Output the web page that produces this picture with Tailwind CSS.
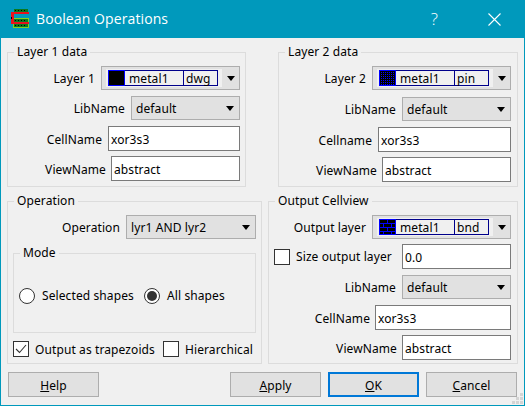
<!DOCTYPE html>
<html lang="en">
<head>
    <meta charset="UTF-8">
    <title>Boolean Operations</title>
    <script src="https://cdn.jsdelivr.net/npm/@tailwindcss/browser@4"></script>
</head>
<body class="w-[525px] h-[406px] overflow-hidden bg-[#f0f0f0] text-black font-['Noto_Sans',sans-serif] text-[12px] tracking-[0.1px] leading-[14px]">

<div class="relative w-[525px] h-[406px] flex flex-col border-x border-b border-[#0099bc]">

    <!-- title bar -->
    <div class="h-[38px] -mx-px shrink-0 bg-[#0099bc] text-white flex items-center">
        <svg class="ml-[10px] w-[20px] h-[20px]" viewBox="0 0 20 20" shape-rendering="crispEdges">
            <path d="M3 9h16v10H3zM4 10v8h14v-8z" fill="#7ed321" fill-rule="evenodd"/>
            <rect x="4" y="0" width="14" height="3" fill="#0a7a20"/>
            <rect x="4" y="10" width="14" height="3" fill="#0a7a20"/>
            <rect x="4" y="15" width="14" height="3" fill="#0a7a20"/>
            <path d="M5 1h1v1H5zM8 1h1v1H8zM11 1h1v1h-1zM14 1h1v1h-1zM5 11h1v1H5zM8 11h1v1H8zM11 11h1v1h-1zM14 11h1v1h-1zM5 16h1v1H5zM8 16h1v1H8zM11 16h1v1h-1zM14 16h1v1h-1z" fill="#000"/>
            <path d="M1 3h18v2H4v8h15v2H1z" fill="#e8101c"/>
            <rect y="8" x="1" width="1" height="2" fill="#000"/>
        </svg>
        <span class="ml-[6px] font-['Open_Sans',sans-serif] text-[14px] tracking-[0.1px]">Boolean Operations</span>
        <span class="ml-auto mr-[50px] font-['Open_Sans',sans-serif] font-light text-[17px]">?</span>
        <svg class="mr-[24px] w-[13px] h-[13px]" viewBox="0 0 13 13" fill="none" stroke="#fff" stroke-width="1.1"><path d="M.5.5l12 12M12.5.5l-12 12"/></svg>
    </div>

    <div class="flex-1 px-[6px] pt-[7px] flex flex-col">

        <!-- top row -->
        <div class="flex justify-between">
            <fieldset class="w-[239px] h-[142px] border border-[#dcdcdc] pr-[5px]">
                <legend class="ml-[6px] px-[3px]">Layer 1 data</legend>
                <div class="pt-[7px] flex flex-col">
                    <div class="h-[24px] flex justify-end items-center gap-[6px]">
                        <span class="pt-[2px]">Layer 1</span>
                        <div class="w-[139px] h-[24px] border border-[#adadad] bg-[#e1e1e1] flex items-center pl-[4px]">
                            <div class="w-[116px] h-[18px] bg-[#f0f0f0] flex items-center pl-[2px]">
                                <div class="w-[110px] h-[16px] border border-[#00008b] flex items-center">
                                    <span class="w-[17px] h-[16px] -ml-px bg-black border border-[#0000ff] shrink-0"></span>
                                    <span class="w-[59px] pl-[4px] pt-px border-r border-[#00008b] h-[14px]">metal1</span>
                                    <span class="pl-[2px] pt-[2px]">dwg</span>
                                </div>
                            </div>
                            <svg class="ml-[5px] w-[8px] h-[5px]" viewBox="0 0 8 5"><path d="M0 0h8L4 5z" fill="#000"/></svg>
                        </div>
                    </div>
                    <div class="h-[24px] mt-[6px] flex justify-end items-center gap-[6px]">
                        <span class="pt-[2px]">LibName</span>
                        <div class="w-[109px] h-[24px] border border-[#adadad] bg-[#e1e1e1] flex items-center pl-[4px]">
                            <span class="flex-1 pt-[2px]">default</span>
                            <svg class="mr-[5px] w-[8px] h-[5px]" viewBox="0 0 8 5"><path d="M0 0h8L4 5z" fill="#000"/></svg>
                        </div>
                    </div>
                    <div class="h-[25px] mt-[6px] flex justify-end items-center gap-[6px]">
                        <span class="pt-[2px]">CellName</span>
                        <div class="w-[132px] h-[25px] border border-[#7a7a7a] bg-white flex items-center pl-[2px] pt-[2px]">xor3s3</div>
                    </div>
                    <div class="h-[25px] mt-[5px] flex justify-end items-center gap-[5px]">
                        <span class="pt-[2px]">ViewName</span>
                        <div class="w-[129px] h-[25px] border border-[#7a7a7a] bg-white flex items-center pl-[2px] pt-[2px]">abstract</div>
                    </div>
                </div>
            </fieldset>

            <fieldset class="w-[240px] h-[142px] border border-[#dcdcdc] pr-[6px]">
                <legend class="ml-[6px] px-[3px]">Layer 2 data</legend>
                <div class="pt-[7px] flex flex-col">
                    <div class="h-[24px] flex justify-end items-center gap-[6px]">
                        <span class="pt-[2px]">Layer 2</span>
                        <div class="w-[139px] h-[24px] border border-[#adadad] bg-[#e1e1e1] flex items-center pl-[4px]">
                            <div class="w-[116px] h-[18px] bg-[#f0f0f0] flex items-center pl-[2px]">
                                <div class="w-[110px] h-[16px] border border-[#00008b] flex items-center">
                                    <svg class="w-[17px] h-[16px] -ml-px shrink-0" viewBox="0 0 17 16" shape-rendering="crispEdges">
                                        <defs><pattern id="dots" width="2" height="2" patternUnits="userSpaceOnUse"><rect width="2" height="2" fill="#000"/><rect width="1" height="1" fill="#0000ff"/></pattern></defs>
                                        <rect width="17" height="16" fill="url(#dots)"/>
                                        <rect x=".5" y=".5" width="16" height="15" fill="none" stroke="#0000ff"/>
                                    </svg>
                                    <span class="w-[59px] pl-[4px] pt-px border-r border-[#00008b] h-[14px]">metal1</span>
                                    <span class="pl-[2px] pt-[2px]">pin</span>
                                </div>
                            </div>
                            <svg class="ml-[5px] w-[8px] h-[5px]" viewBox="0 0 8 5"><path d="M0 0h8L4 5z" fill="#000"/></svg>
                        </div>
                    </div>
                    <div class="h-[24px] mt-[7px] flex justify-end items-center gap-[6px]">
                        <span class="pt-[2px]">LibName</span>
                        <div class="w-[109px] h-[24px] border border-[#adadad] bg-[#e1e1e1] flex items-center pl-[4px]">
                            <span class="flex-1 pt-[2px]">default</span>
                            <svg class="mr-[5px] w-[8px] h-[5px]" viewBox="0 0 8 5"><path d="M0 0h8L4 5z" fill="#000"/></svg>
                        </div>
                    </div>
                    <div class="h-[25px] mt-[6px] flex justify-end items-center gap-[6px]">
                        <span class="pt-[2px]">Cellname</span>
                        <div class="w-[133px] h-[25px] border border-[#7a7a7a] bg-white flex items-center pl-[2px] pt-[2px]">xor3s3</div>
                    </div>
                    <div class="h-[25px] mt-[5px] flex justify-end items-center gap-[5px]">
                        <span class="pt-[2px]">ViewName</span>
                        <div class="w-[129px] h-[25px] border border-[#7a7a7a] bg-white flex items-center pl-[2px] pt-[2px]">abstract</div>
                    </div>
                </div>
            </fieldset>
        </div>

        <!-- bottom row -->
        <div class="flex justify-between mt-[7px]">
            <fieldset class="w-[255px] h-[170px] border border-[#dcdcdc] px-[5px]">
                <legend class="ml-[1px] px-[3px]">Operation</legend>
                <div class="pt-[7px] flex flex-col">
                    <div class="h-[24px] flex justify-end items-center gap-[6px]">
                        <span class="pt-[2px]">Operation</span>
                        <div class="w-[130px] h-[24px] border border-[#adadad] bg-[#e1e1e1] flex items-center pl-[4px]">
                            <span class="flex-1 pt-[2px]">lyr1 AND lyr2</span>
                            <svg class="mr-[5px] w-[8px] h-[5px]" viewBox="0 0 8 5"><path d="M0 0h8L4 5z" fill="#000"/></svg>
                        </div>
                    </div>
                    <fieldset class="mt-[7px] h-[87px] border border-[#dcdcdc]">
                        <legend class="ml-[6px] px-[3px]">Mode</legend>
                        <div class="h-[72px] flex items-center pl-[5px]">
                            <span class="w-[16px] h-[16px] rounded-full border border-[#333] bg-white shrink-0"></span>
                            <span class="ml-[7px] w-[102px]">Selected shapes</span>
                            <span class="w-[16px] h-[16px] rounded-full border border-[#333] bg-white shrink-0 flex items-center justify-center"><span class="w-[10px] h-[10px] rounded-full bg-[#333]"></span></span>
                            <span class="ml-[7px]">All shapes</span>
                        </div>
                    </fieldset>
                    <div class="mt-[8px] h-[15px] flex items-center">
                        <span class="w-[16px] h-[16px] border border-[#333] bg-white shrink-0 flex items-center justify-center">
                            <svg class="w-[12px] h-[10px]" viewBox="0 0 12 10" fill="none" stroke="#333" stroke-width="1.1"><path d="M1 5l3.5 3.5L11 1"/></svg>
                        </span>
                        <span class="ml-[6px] w-[128px] pt-[2px]">Output as trapezoids</span>
                        <span class="w-[16px] h-[16px] border border-[#333] bg-white shrink-0"></span>
                        <span class="ml-[6px] pt-[2px]">Hierarchical</span>
                    </div>
                </div>
            </fieldset>

            <fieldset class="w-[250px] h-[170px] border border-[#dcdcdc] pr-[6px] pl-[5px]">
                <legend class="ml-[1px] px-[3px]">Output Cellview</legend>
                <div class="pt-[7px] flex flex-col">
                    <div class="h-[24px] flex justify-end items-center gap-[6px]">
                        <span class="pt-[2px]">Output layer</span>
                        <div class="w-[139px] h-[24px] border border-[#adadad] bg-[#e1e1e1] flex items-center pl-[4px]">
                            <div class="w-[116px] h-[18px] bg-[#f0f0f0] flex items-center pl-[2px]">
                                <div class="w-[110px] h-[16px] border border-[#00008b] flex items-center">
                                    <svg class="w-[17px] h-[16px] -ml-px shrink-0" viewBox="0 0 17 16" shape-rendering="crispEdges">
                                        <defs><pattern id="bricks" x="1" y="1" width="8" height="8" patternUnits="userSpaceOnUse"><rect width="8" height="8" fill="#000"/><rect y="3" width="8" height="1" fill="#0000ff"/><rect y="7" width="8" height="1" fill="#0000ff"/><rect x="7" width="1" height="3" fill="#0000ff"/><rect x="3" y="4" width="1" height="3" fill="#0000ff"/></pattern></defs>
                                        <rect width="17" height="16" fill="url(#bricks)"/>
                                        <rect x=".5" y=".5" width="16" height="15" fill="none" stroke="#0000ff"/>
                                    </svg>
                                    <span class="w-[59px] pl-[4px] pt-px border-r border-[#00008b] h-[14px]">metal1</span>
                                    <span class="pl-[2px] pt-[2px]">bnd</span>
                                </div>
                            </div>
                            <svg class="ml-[5px] w-[8px] h-[5px]" viewBox="0 0 8 5"><path d="M0 0h8L4 5z" fill="#000"/></svg>
                        </div>
                    </div>
                    <div class="h-[25px] mt-[5px] flex items-center">
                        <span class="w-[16px] h-[16px] border border-[#333] bg-white shrink-0"></span>
                        <span class="ml-[6px]">Size output layer</span>
                        <div class="ml-auto w-[109px] h-[25px] border border-[#7a7a7a] bg-white flex items-center pl-[2px] pt-[2px]">0.0</div>
                    </div>
                    <div class="h-[24px] mt-[6px] flex justify-end items-center gap-[6px]">
                        <span class="pt-[2px]">LibName</span>
                        <div class="w-[109px] h-[24px] border border-[#adadad] bg-[#e1e1e1] flex items-center pl-[4px]">
                            <span class="flex-1 pt-[2px]">default</span>
                            <svg class="mr-[5px] w-[8px] h-[5px]" viewBox="0 0 8 5"><path d="M0 0h8L4 5z" fill="#000"/></svg>
                        </div>
                    </div>
                    <div class="h-[25px] mt-[6px] flex justify-end items-center gap-[5px]">
                        <span class="pt-[2px]">CellName</span>
                        <div class="w-[136px] h-[25px] border border-[#7a7a7a] bg-white flex items-center pl-[2px] pt-[2px]">xor3s3</div>
                    </div>
                    <div class="h-[25px] mt-[5px] flex justify-end items-center gap-[5px]">
                        <span class="pt-[2px]">ViewName</span>
                        <div class="w-[109px] h-[25px] border border-[#7a7a7a] bg-white flex items-center pl-[2px] pt-[2px]">abstract</div>
                    </div>
                </div>
            </fieldset>
        </div>

        <!-- buttons -->
        <div class="mt-[8px] pl-px flex">
            <button class="w-[91px] h-[25px] border border-[#adadad] bg-[#e1e1e1] pt-[2px]"><u>H</u>elp</button>
            <button class="ml-[131px] w-[91px] h-[25px] border border-[#adadad] bg-[#e1e1e1] pt-[2px]"><u>A</u>pply</button>
            <button class="ml-[7px] w-[91px] h-[25px] border-2 border-[#0078d7] bg-[#e1e1e1] pt-[2px]"><u>O</u>K</button>
            <button class="ml-[7px] w-[91px] h-[25px] border border-[#adadad] bg-[#e1e1e1] pt-[2px]"><u>C</u>ancel</button>
        </div>
    </div>

    <!-- size grip -->
    <svg class="absolute right-[1px] bottom-[1px] w-[11px] h-[11px]" viewBox="0 0 11 11" shape-rendering="crispEdges">
        <path d="M8 0h3v3H8zM4 4h3v3H4zM8 4h3v3H8zM0 8h3v3H0zM4 8h3v3H4zM8 8h3v3H8z" fill="#d4d4d4"/>
    </svg>
</div>

</body>
</html>
